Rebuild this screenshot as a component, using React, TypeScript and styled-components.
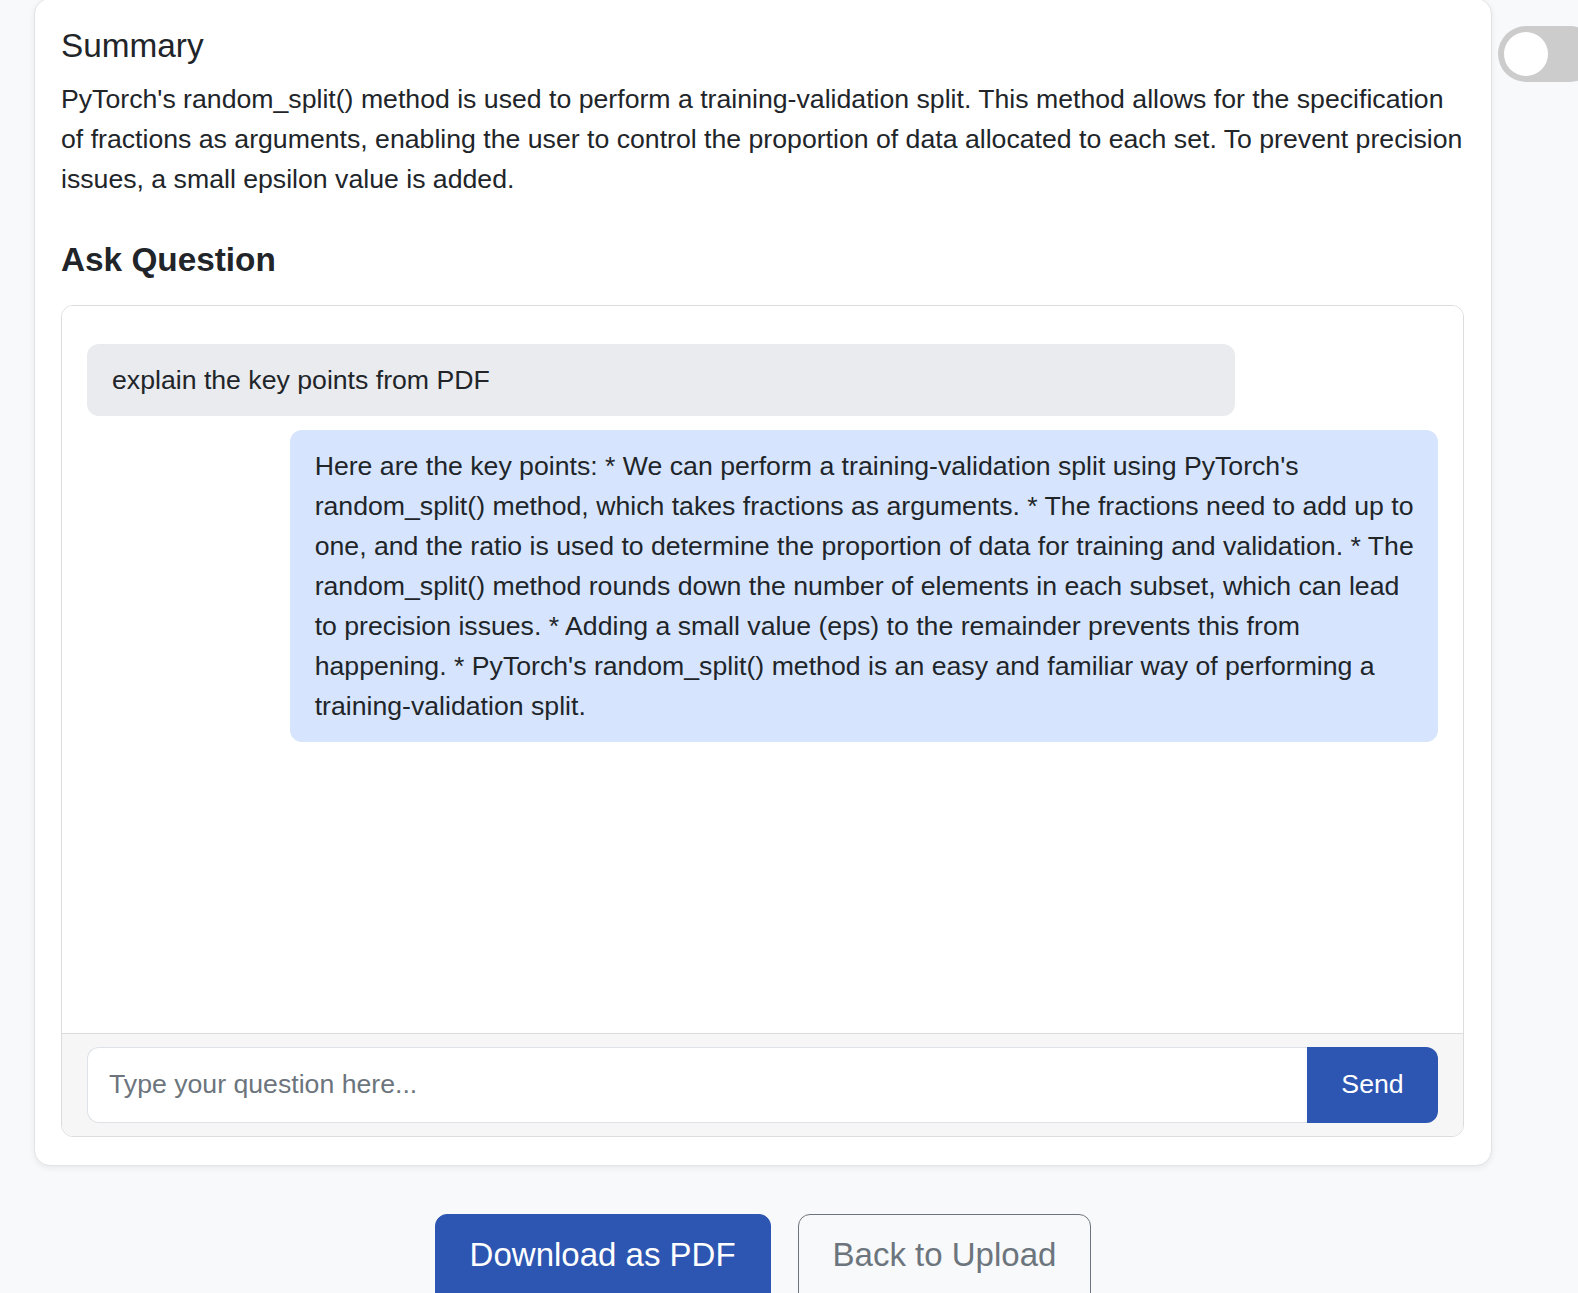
import React from "react";
import styled, { createGlobalStyle } from "styled-components";

const GlobalStyle = createGlobalStyle`
  html, body {
    margin: 0;
    padding: 0;
    background: #f8f9fa;
    font-family: "Liberation Sans", Arial, sans-serif;
    color: #212529;
    overflow: hidden;
  }
  * { box-sizing: border-box; }
`;

const Page = styled.div`
  position: relative;
  width: 1578px;
  height: 1293px;
  padding-left: 34px;
  overflow: hidden;
`;

const Main = styled.main`
  width: 1458px;
  margin-top: -2px;
  display: flex;
  flex-direction: column;
`;

const Card = styled.section`
  background: #ffffff;
  border: 1px solid #e1e3e6;
  border-radius: 16px;
  box-shadow: 0 2px 6px rgba(0, 0, 0, 0.07);
  padding: 27px 27px 28px 26px;
  display: flex;
  flex-direction: column;
`;

const SummaryTitle = styled.h2`
  margin: 0;
  font-size: 33.33px;
  line-height: 1.2;
  font-weight: 400;
  color: #212529;
`;

const SummaryText = styled.p`
  margin: 13px 0 0;
  font-size: 26.67px;
  line-height: 40px;
  color: #212529;
`;

const SectionTitle = styled.h3`
  margin: 41px 0 0;
  font-size: 33.33px;
  line-height: 1.2;
  font-weight: 700;
  color: #212529;
`;

const ChatBox = styled.div`
  margin-top: 25px;
  border: 1px solid #dcdcdc;
  border-radius: 12px;
  overflow: hidden;
  display: flex;
  flex-direction: column;
`;

const Messages = styled.div`
  height: 727px;
  padding: 38px 25px 25px;
  display: flex;
  flex-direction: column;
  gap: 14px;
  background: #ffffff;
`;

const Bubble = styled.div<{ $from: "user" | "bot" }>`
  width: 85%;
  align-self: ${(p) => (p.$from === "user" ? "flex-start" : "flex-end")};
  background: ${(p) => (p.$from === "user" ? "#e9ebef" : "#d6e5fd")};
  border-radius: 12px;
  padding: 16px 21px 16px 25px;
  font-size: 26.67px;
  line-height: 40px;
  color: #212529;
`;

const InputBar = styled.form`
  border-top: 1px solid #dcdcdc;
  background: #f6f6f6;
  padding: 13px 25px 13px 25px;
  display: flex;
`;

const QuestionInput = styled.input`
  flex: 1;
  height: 76px;
  border: 1px solid #dee2e6;
  border-right: none;
  border-radius: 12px 0 0 12px;
  background: #ffffff;
  padding: 0 21px;
  font-family: "Liberation Sans", Arial, sans-serif;
  font-size: 26.67px;
  color: #212529;
  outline: none;
  &::placeholder {
    color: #6c757d;
  }
`;

const SendButton = styled.button`
  width: 131px;
  height: 76px;
  border: none;
  border-radius: 0 12px 12px 0;
  background: #2d55b2;
  color: #ffffff;
  font-family: "Liberation Sans", Arial, sans-serif;
  font-size: 26.67px;
`;

const Actions = styled.div`
  margin-top: 48px;
  display: flex;
  justify-content: center;
  gap: 27px;
`;

const ActionButton = styled.button<{ $variant: "primary" | "outline" }>`
  height: 92px;
  padding: 0 34px 10px;
  border-radius: 12px;
  font-family: "Liberation Sans", Arial, sans-serif;
  font-size: 33px;
  line-height: 1;
  border: 1px solid ${(p) => (p.$variant === "primary" ? "#2d55b2" : "#6c757d")};
  background: ${(p) => (p.$variant === "primary" ? "#2d55b2" : "transparent")};
  color: ${(p) => (p.$variant === "primary" ? "#ffffff" : "#6c757d")};
`;

const Toggle = styled.div`
  position: absolute;
  top: 26px;
  left: 1498px;
  width: 100px;
  height: 56px;
  border-radius: 28px;
  background: #cccccc;
  padding: 6px;
`;

const Knob = styled.span`
  display: block;
  width: 44px;
  height: 44px;
  border-radius: 50%;
  background: #ffffff;
`;

export default function App() {
  return (
    <>
      <GlobalStyle />
      <Page>
        <Main>
          <Card>
            <SummaryTitle>Summary</SummaryTitle>
            <SummaryText>
              PyTorch's random_split() method is used to perform a training-validation split. This method
              allows for the specification of fractions as arguments, enabling the user to control the
              proportion of data allocated to each set. To prevent precision issues, a small epsilon value is
              added.
            </SummaryText>
            <SectionTitle>Ask Question</SectionTitle>
            <ChatBox>
              <Messages>
                <Bubble $from="user">explain the key points from PDF</Bubble>
                <Bubble $from="bot">
                  Here are the key points: * We can perform a training-validation split using PyTorch's
                  random_split() method, which takes fractions as arguments. * The fractions need to add up to
                  one, and the ratio is used to determine the proportion of data for training and validation. *
                  The random_split() method rounds down the number of elements in each subset, which can lead to
                  precision issues. * Adding a small value (eps) to the remainder prevents this from happening.
                  * PyTorch's random_split() method is an easy and familiar way of performing a
                  training-validation split.
                </Bubble>
              </Messages>
              <InputBar onSubmit={(e) => e.preventDefault()}>
                <QuestionInput type="text" placeholder="Type your question here..." />
                <SendButton type="submit">Send</SendButton>
              </InputBar>
            </ChatBox>
          </Card>
          <Actions>
            <ActionButton $variant="primary">Download as PDF</ActionButton>
            <ActionButton $variant="outline">Back to Upload</ActionButton>
          </Actions>
        </Main>
        <Toggle>
          <Knob />
        </Toggle>
      </Page>
    </>
  );
}
